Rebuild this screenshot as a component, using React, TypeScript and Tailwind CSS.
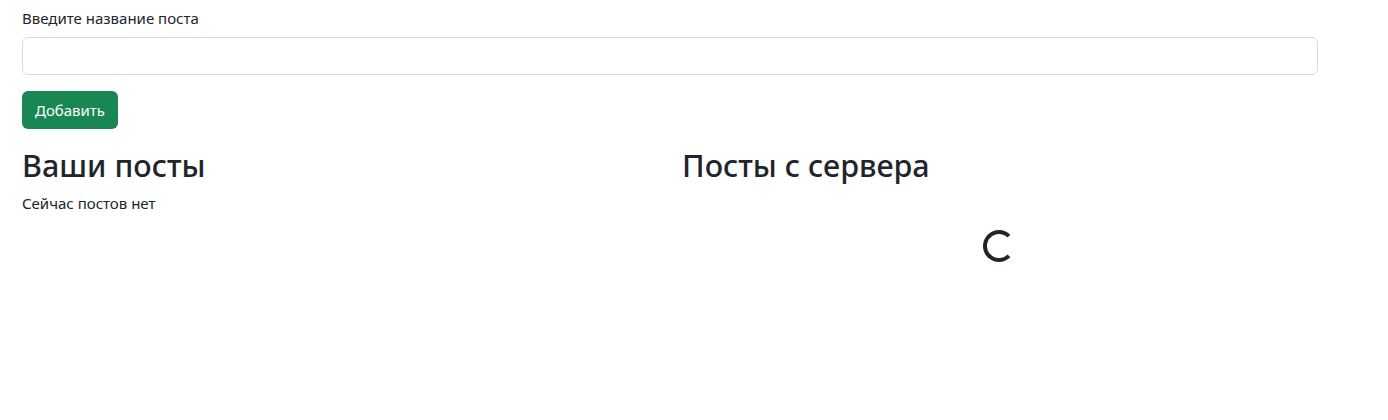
import React from "react";

export default function App() {
  return (
    <div className="min-h-[420px] bg-white text-[#212529] font-['Noto_Sans','Open_Sans',sans-serif]">
      <div className="pl-[22px] pt-[8px] w-[1318px]">
        <label className="block text-[15px] leading-[21px] mb-[8px]">Введите название поста</label>
        <input
          type="text"
          className="block w-[1296px] h-[38px] border border-[#d6dadf] rounded-[6px] px-3 outline-none"
        />
        <button className="mt-[16px] h-[38px] w-[96px] rounded-[6px] bg-[#198754] text-white text-[15px] leading-[24px]">
          Добавить
        </button>
      </div>
      <div className="flex pl-[10px] w-[1330px]">
        <div className="w-[660px] px-[12px]">
          <h2 className="text-[30.5px] leading-[40px] font-medium mt-[16px] mb-[8px]">Ваши посты</h2>
          <p className="text-[15px] leading-[21px]">Сейчас постов нет</p>
        </div>
        <div className="w-[660px] px-[12px]">
          <h2 className="text-[30.5px] leading-[40px] font-medium mt-[16px] mb-[8px]">Посты с сервера</h2>
          <div className="flex justify-center mt-[45px] pr-[2px]">
            <div className="w-[32px] h-[32px] rounded-full border-[4px] border-[#212529] border-r-transparent" />
          </div>
        </div>
      </div>
    </div>
  );
}
